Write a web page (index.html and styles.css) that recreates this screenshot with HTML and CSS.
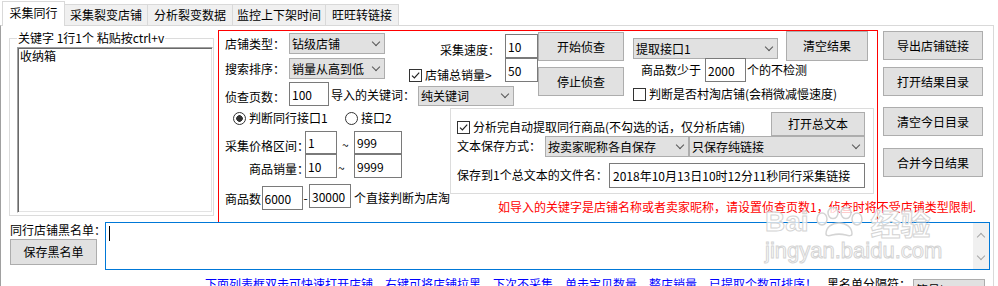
FILE: index.html
```html
<!DOCTYPE html>
<html lang="zh-CN">
<head>
    <meta charset="UTF-8">
    <title>采集同行</title>
    <link rel="stylesheet" href="styles.css">
</head>
<body>
    <div class="tabs">
        <div class="tab active w1">采集同行</div>
        <div class="tab w2">采集裂变店铺</div>
        <div class="tab w3">分析裂变数据</div>
        <div class="tab w4">监控上下架时间</div>
        <div class="tab w5">旺旺转链接</div>
    </div>

    <div class="page">
        <div class="main">
            <fieldset class="keywords">
                <legend>关键字 1行1个 粘贴按ctrl+v</legend>
                <textarea class="kw-text">收纳箱</textarea>
            </fieldset>

            <div class="panel">
                <div class="top">
                    <div class="block-l">
                        <div class="sub1">
                            <div class="col1">
                                <div class="line"><span class="lab w64">店铺类型：</span><div class="combo c96">钻级店铺</div></div>
                                <div class="line"><span class="lab w64">搜索排序：</span><div class="combo c96">销量从高到低</div></div>
                            </div>
                            <div class="col-speed">
                                <div class="speed-lab">采集速度：</div>
                                <div class="check sales-check"><span class="cb"><svg viewBox="0 0 11 11"><path d="M2 5.6l2.4 2.4 4.8-5.4"/></svg></span>店铺总销量&gt;</div>
                            </div>
                            <div class="col-inputs">
                                <input class="box" type="text" value="10">
                                <input class="box" type="text" value="50">
                            </div>
                        </div>
                        <div class="sub2">
                            <span class="pages-lab">侦查页数：</span>
                            <input class="box pages" type="text" value="100">
                            <span class="kw-lab">导入的关键词：</span>
                            <div class="combo kw-combo">纯关键词</div>
                        </div>
                    </div>

                    <div class="btns">
                        <div class="btn">开始侦查</div>
                        <div class="btn">停止侦查</div>
                    </div>

                    <div class="block-r">
                        <div class="r1">
                            <div class="combo api-combo">提取接口1</div>
                            <div class="btn clear-btn">清空结果</div>
                        </div>
                        <div class="r2">
                            <span>商品数少于</span>
                            <input class="box" type="text" value="2000">
                            <span>个的不检测</span>
                        </div>
                        <div class="check r3"><span class="cb"></span>判断是否村淘店铺(会稍微减慢速度)</div>
                    </div>
                </div>

                <div class="mid">
                    <div class="mid-l">
                        <div class="radios">
                            <div class="radio first"><span class="rd on"></span>判断同行接口1</div>
                            <div class="radio"><span class="rd"></span>接口2</div>
                        </div>
                        <div class="range price">
                            <span class="range-lab">采集价格区间：</span>
                            <input class="box lo" type="text" value="1">
                            <span class="tilde">~</span>
                            <input class="box hi" type="text" value="999">
                        </div>
                        <div class="range sales">
                            <span class="range-lab right">商品销量：</span>
                            <input class="box lo" type="text" value="10">
                            <span class="tilde t2">~</span>
                            <input class="box hi" type="text" value="9999">
                        </div>
                        <div class="count">
                            <span class="count-lab">商品数</span>
                            <input class="box c6000" type="text" value="6000">
                            <span class="dash">-</span>
                            <input class="box c30000" type="text" value="30000">
                            <span class="count-tail">个直接判断为店淘</span>
                        </div>
                    </div>

                    <div class="mid-r">
                        <div class="group">
                            <div class="g1">
                                <div class="check"><span class="cb"><svg viewBox="0 0 11 11"><path d="M2 5.6l2.4 2.4 4.8-5.4"/></svg></span>分析完自动提取同行商品(不勾选的话，仅分析店铺)</div>
                                <div class="btn open-btn">打开总文本</div>
                            </div>
                            <div class="g2">
                                <span class="g2-lab">文本保存方式：</span>
                                <div class="combo save-mode">按卖家昵称各自保存</div>
                                <div class="combo save-kind">只保存纯链接</div>
                            </div>
                            <div class="g3">
                                <span class="g3-lab">保存到1个总文本的文件名：</span>
                                <input class="box file" type="text" value="2018年10月13日10时12分11秒同行采集链接">
                            </div>
                        </div>
                        <div class="warn">如导入的关键字是店铺名称或者卖家昵称，请设置侦查页数1，侦查时将不受店铺类型限制.</div>
                    </div>
                </div>
            </div>

            <div class="side">
                <div class="btn">导出店铺链接</div>
                <div class="btn s2">打开结果目录</div>
                <div class="btn s3">清空今日目录</div>
                <div class="btn s4">合并今日结果</div>
            </div>
        </div>

        <div class="blacklist">
            <div class="bl-left">
                <div class="bl-lab">同行店铺黑名单：</div>
                <div class="btn bl-save">保存黑名单</div>
            </div>
            <div class="bl-box">
                <span class="caret"></span>
                <div class="vscroll"><span class="arr up"></span><span class="arr down"></span></div>
            </div>
        </div>

        <div class="hint">
            <span class="hint-blue">下面列表框双击可快速打开店铺，右键可将店铺拉黑，下次不采集，单击宝贝数量，整店销量，已提取个数可排序！</span>
            <span class="hint-lab">黑名单分隔符：</span>
            <div class="combo sep-combo">符号|</div>
        </div>
    </div>

    <div class="watermark">
        <div class="wm-top">Bai<svg class="paw" width="62" height="30" viewBox="0 0 62 30"><ellipse cx="13" cy="12" rx="5" ry="6"/><ellipse cx="24" cy="6" rx="5" ry="5.5"/><ellipse cx="37" cy="6" rx="5" ry="5.5"/><ellipse cx="48" cy="12" rx="5" ry="6"/><path d="M17 27c0-7 6-11 13-11s13 4 13 11c0 2-3 2-6 1-4-1-10-1-14 0-3 1-6 1-6-1z"/></svg><span class="wm-cn">经验</span></div>
        <div class="wm-url">jingyan.baidu.com</div>
    </div>
</body>
</html>
```

FILE: styles.css
```css
* {
    box-sizing: border-box;
}
body {
    margin: 0;
    width: 998px;
    height: 286px;
    overflow: hidden;
    position: relative;
    background: #fff;
    font-family: "Noto Sans CJK SC", "Microsoft YaHei", sans-serif;
    font-size: 12px;
    line-height: 16px;
    color: #000;
}
input, textarea {
    font: inherit;
    color: #000;
    margin: 0;
    outline: none;
}

/* tabs */
.tabs {
    display: flex;
    align-items: flex-end;
    height: 25px;
    padding-left: 2px;
}
.tab {
    height: 21px;
    margin-right: -1px;
    border: 1px solid #d9d9d9;
    border-bottom: none;
    background: #f0f0f0;
    line-height: 19px;
    text-align: center;
    white-space: nowrap;
}
.tab.active {
    height: 25px;
    margin-bottom: -1px;
    background: #fff;
    line-height: 22px;
    position: relative;
    z-index: 1;
}
.w1 { width: 63px; }
.w2 { width: 84px; }
.w3 { width: 86px; }
.w4 { width: 94px; }
.w5 { width: 74px; }

.page {
    width: 994px;
    height: 261px;
    border-top: 1px solid #d9d9d9;
    border-left: 1px solid #a0a0a0;
    border-right: 1px solid #d9d9d9;
}
.main {
    display: flex;
    align-items: flex-start;
    height: 198px;
}

/* keyword group */
.keywords {
    margin: 5px 0 0 8px;
    padding: 0 0 2px 7px;
    width: 205px;
    min-width: 0;
    border: 1px solid #dcdcdc;
}
.keywords legend {
    padding: 0 1px;
    line-height: 14px;
}
.kw-text {
    display: block;
    width: 196px;
    height: 166px;
    margin-top: 2px;
    padding: 0 2px;
    resize: none;
    border: 1px solid;
    border-color: #a0a0a0 #fff #fff #a0a0a0;
    box-shadow: inset 1px 1px #696969, inset -1px -1px #e3e3e3;
}

/* common controls */
.box {
    display: block;
    height: 24px;
    padding: 0 2px;
    border: 1px solid #7a7a7a;
    background: #fff;
}
.btn {
    display: flex;
    align-items: center;
    justify-content: center;
    height: 29px;
    background: #e1e1e1;
    border: 1px solid #adadad;
    white-space: nowrap;
}
.combo {
    display: flex;
    align-items: center;
    justify-content: space-between;
    height: 21px;
    padding: 0 5px 0 2px;
    background: #e1e1e1;
    border: 1px solid #adadad;
    white-space: nowrap;
}
.combo::after {
    content: "";
    width: 5px;
    height: 5px;
    margin-top: -4px;
    border-right: 1px solid #555;
    border-bottom: 1px solid #555;
    transform: rotate(45deg);
}
.check {
    display: flex;
    align-items: center;
    white-space: nowrap;
}
.cb {
    flex: none;
    width: 13px;
    height: 13px;
    margin-right: 3px;
    border: 1px solid #333;
    background: #fff;
}
.cb svg {
    display: block;
    width: 11px;
    height: 11px;
    fill: none;
    stroke: #222;
    stroke-width: 1.2;
}
.rd {
    flex: none;
    width: 13px;
    height: 13px;
    margin-right: 3px;
    border: 1px solid #333;
    border-radius: 50%;
    background: #fff;
}
.rd.on {
    background: radial-gradient(circle, #333 3px, #fff 3.6px);
}

/* red panel */
.panel {
    margin: 4px 0 0 4px;
    width: 660px;
    height: 194px;
    border: 1px solid #f00;
}
.top {
    display: flex;
    height: 77px;
}
.block-l {
    width: 319px;
}
.sub1 {
    display: flex;
    height: 51px;
}
.col1 {
    width: 166px;
    padding: 2px 0 0 6px;
    display: flex;
    flex-direction: column;
    gap: 4px;
}
.line {
    display: flex;
    align-items: center;
}
.lab {
    white-space: nowrap;
}
.w64 { width: 64px; }
.c96 { width: 96px; }
.col-speed {
    width: 120px;
}
.speed-lab {
    margin-top: 11px;
    padding-right: 5px;
    text-align: right;
}
.sales-check {
    margin: 9px 0 0 24px;
}
.col-inputs {
    width: 33px;
    padding-top: 3px;
}
.col-inputs .box {
    width: 33px;
}
.sub2 {
    display: flex;
    align-items: flex-start;
    padding-left: 6px;
}
.pages-lab {
    width: 64px;
    margin-top: 7px;
}
.pages {
    width: 40px;
}
.kw-lab {
    margin: 5px 0 0 2px;
    white-space: nowrap;
}
.kw-combo {
    width: 96px;
    height: 20px;
    margin: 4px 0 0 3px;
}
.btns {
    width: 86px;
    padding-top: 1px;
    margin-right: 9px;
}
.btns .btn + .btn {
    margin-top: 6px;
}
.block-r {
    width: 235px;
}
.r1 {
    display: flex;
    align-items: flex-start;
    height: 27px;
}
.api-combo {
    width: 145px;
    margin-top: 7px;
}
.clear-btn {
    width: 82px;
    height: 30px;
    margin-left: 8px;
}
.r2 {
    display: flex;
    align-items: center;
    height: 24px;
    padding-left: 8px;
}
.r2 .box {
    width: 41px;
    margin: 0 1px 0 4px;
}
.r3 {
    margin-top: 4px;
    height: 16px;
}

.mid {
    display: flex;
}
.mid-l {
    width: 231px;
}
.radios {
    display: flex;
    align-items: center;
    height: 16px;
    margin-top: 2px;
    padding-left: 14px;
}
.radio {
    display: flex;
    align-items: center;
    white-space: nowrap;
}
.radio.first {
    width: 112px;
}
.range {
    display: flex;
    align-items: flex-start;
    padding-left: 6px;
}
.range.price {
    margin-top: 5px;
}
.range.price .box {
    height: 23px;
}
.range-lab {
    width: 84px;
    margin: 7px -4px 0 0;
    white-space: nowrap;
}
.range-lab.right {
    text-align: right;
}
.lo { width: 32px; }
.hi { width: 48px; }
.tilde {
    width: 17px;
    padding-left: 5px;
    margin-top: 6px;
}
.tilde.t2 {
    padding-left: 1px;
}
.count {
    display: flex;
    align-items: flex-start;
    padding-left: 6px;
    margin-top: 6px;
}
.count-lab {
    width: 40px;
    margin-top: 7px;
}
.c6000 {
    width: 41px;
    margin-top: 2px;
}
.dash {
    width: 7px;
    padding-left: 1px;
    margin-top: 6px;
}
.c30000 {
    width: 42px;
}
.count-tail {
    margin: 6px 0 0 3px;
    white-space: nowrap;
}

.mid-r {
    width: 424px;
}
.group {
    height: 86px;
    border: 1px solid #dcdcdc;
}
.g1 {
    display: flex;
    align-items: flex-start;
    height: 24px;
    margin-top: 3px;
    padding: 0 8px 0 6px;
}
.g1 .check {
    margin-top: 7px;
}
.open-btn {
    width: 94px;
    height: 24px;
    margin-left: auto;
}
.g2 {
    display: flex;
    align-items: flex-start;
    padding-left: 6px;
}
.g2-lab {
    width: 88px;
    margin-top: 2px;
    white-space: nowrap;
}
.save-mode { width: 144px; }
.save-kind { width: 176px; }
.g3 {
    display: flex;
    align-items: flex-start;
    padding-left: 6px;
    margin-top: 6px;
}
.g3-lab {
    width: 152px;
    margin-top: 4px;
    white-space: nowrap;
}
.file {
    width: 256px;
    height: 25px;
    padding-left: 3px;
}
.warn {
    margin: 5px 0 0 48px;
    color: #f00;
    white-space: nowrap;
}

/* right buttons */
.side {
    width: 100px;
    margin: 5px 0 0 5px;
}
.side .s2 { margin-top: 7px; }
.side .s3 { margin-top: 11px; }
.side .s4 { margin-top: 12px; }

/* blacklist */
.blacklist {
    display: flex;
    height: 48px;
    margin-top: -2px;
}
.bl-left {
    width: 104px;
    padding-left: 9px;
}
.bl-lab {
    white-space: nowrap;
}
.bl-save {
    width: 87px;
    height: 26px;
    margin-top: 1px;
}
.bl-box {
    display: flex;
    width: 885px;
    height: 48px;
    border: 1px solid #0078d7;
    background: #fff;
}
.caret {
    width: 1px;
    height: 15px;
    margin: 3px 0 0 3px;
    background: #000;
}
.vscroll {
    display: flex;
    flex-direction: column;
    justify-content: space-between;
    align-items: center;
    width: 16px;
    margin-left: auto;
    padding: 9px 0 8px;
    background: #f0f0f0;
}
.arr {
    width: 6px;
    height: 6px;
    border-left: 1px solid #a6a6a6;
    border-top: 1px solid #a6a6a6;
}
.arr.up {
    transform: rotate(45deg);
    margin-top: 2px;
}
.arr.down {
    transform: rotate(225deg);
    margin-bottom: 2px;
}

/* hint line */
.hint {
    display: flex;
    align-items: flex-start;
    margin-top: 6px;
    padding-left: 204px;
    white-space: nowrap;
}
.hint-blue {
    width: 622px;
    color: #00f;
}
.hint-lab {
    width: 86px;
}
.sep-combo {
    width: 72px;
    margin-top: 3px;
}

/* site watermark */
.watermark {
    position: absolute;
    left: 765px;
    top: 207px;
    color: rgba(255, 255, 255, 0.75);
    -webkit-text-stroke: 1px #d4d4d4;
    font-family: "Liberation Sans", sans-serif;
    font-weight: bold;
    pointer-events: none;
}
.wm-top {
    display: flex;
    align-items: center;
    font-size: 28px;
    line-height: 30px;
}
.paw {
    fill: rgba(255, 255, 255, 0.75);
    stroke: #d4d4d4;
    stroke-width: 1.5;
}
.wm-cn {
    font-family: "Noto Sans CJK SC", sans-serif;
    font-size: 30px;
}
.wm-url {
    font-size: 22px;
    line-height: 24px;
    font-weight: normal;
    margin-top: 2px;
}
```
